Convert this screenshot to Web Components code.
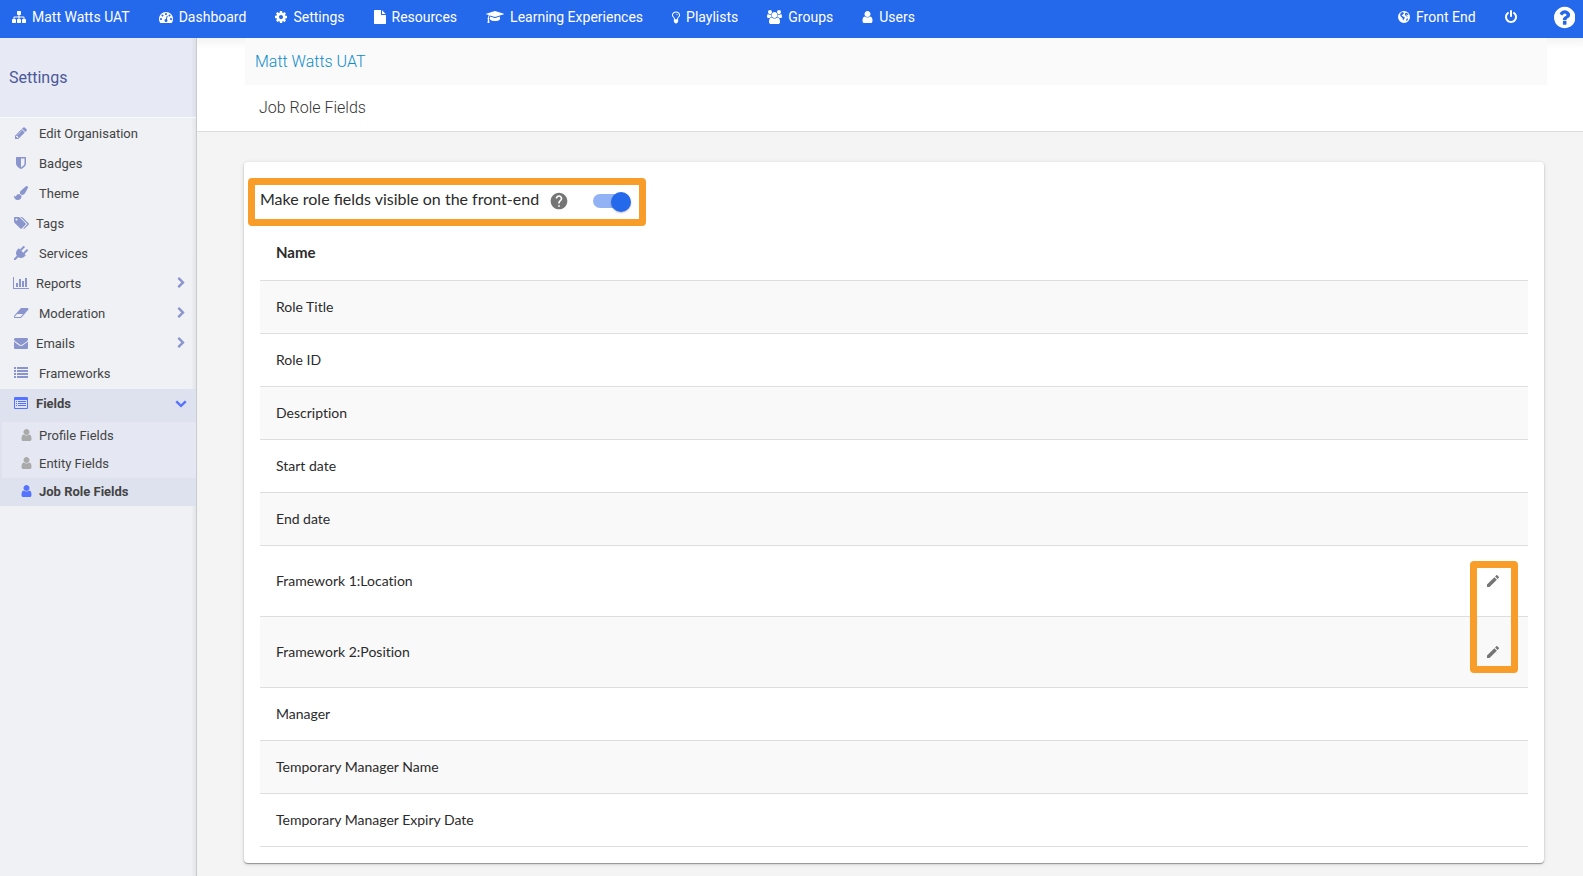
<!DOCTYPE html>
<html lang="en">
<head>
<meta charset="utf-8">
<meta name="viewport" content="width=device-width, initial-scale=1">
<title>Job Role Fields</title>
<style>
  body { margin: 0; font-family: Roboto, "Liberation Sans", sans-serif; font-size: 14px; color: #444; background: #f4f4f4; }
</style>
</head>
<body>
<app-shell>
  <top-bar slot="top">
    <top-link icon="sitemap">Matt Watts UAT</top-link>
    <top-link icon="dashboard">Dashboard</top-link>
    <top-link icon="cog">Settings</top-link>
    <top-link icon="file">Resources</top-link>
    <top-link icon="graduation">Learning Experiences</top-link>
    <top-link icon="bulb">Playlists</top-link>
    <top-link icon="users">Groups</top-link>
    <top-link icon="user">Users</top-link>
    <top-link slot="end" icon="globe">Front End</top-link>
    <top-link slot="end" icon="power" label="Log out"></top-link>
    <top-link slot="end" icon="question" label="Help" large></top-link>
  </top-bar>
  <side-nav slot="side" heading="Settings">
    <side-link icon="pencil">Edit Organisation</side-link>
    <side-link icon="shield">Badges</side-link>
    <side-link icon="brush">Theme</side-link>
    <side-link icon="tags" tight>Tags</side-link>
    <side-link icon="plug">Services</side-link>
    <side-link icon="chart" arrow="right" tight>Reports</side-link>
    <side-link icon="eraser" arrow="right">Moderation</side-link>
    <side-link icon="envelope" arrow="right" tight>Emails</side-link>
    <side-link icon="list">Frameworks</side-link>
    <side-link icon="listalt" arrow="down" tight active>Fields</side-link>
    <side-group>
      <side-link icon="user" sub>Profile Fields</side-link>
      <side-link icon="user" sub>Entity Fields</side-link>
      <side-link icon="user" sub active>Job Role Fields</side-link>
    </side-group>
  </side-nav>
  <page-heading>
    <span slot="crumb">Matt Watts UAT</span>
    Job Role Fields
  </page-heading>
  <content-card>
    <toggle-setting>Make role fields visible on the front-end</toggle-setting>
    <fields-table></fields-table>
  </content-card>
</app-shell>

<script>
// Glyphs: [viewBox, path data]
const ICONS = {
  sitemap: ["0 0 1792 1792", "M1792 1248v320q0 40-28 68t-68 28h-320q-40 0-68-28t-28-68v-320q0-40 28-68t68-28h96v-192h-512v192h96q40 0 68 28t28 68v320q0 40-28 68t-68 28h-320q-40 0-68-28t-28-68v-320q0-40 28-68t68-28h96v-192h-512v192h96q40 0 68 28t28 68v320q0 40-28 68t-68 28h-320q-40 0-68-28t-28-68v-320q0-40 28-68t68-28h96v-192q0-52 38-90t90-38h512v-192h-96q-40 0-68-28t-28-68v-320q0-40 28-68t68-28h320q40 0 68 28t28 68v320q0 40-28 68t-68 28h-96v192h512q52 0 90 38t38 90v192h96q40 0 68 28t28 68z"],
  dashboard: ["0 0 1792 1792", "M384 1152q0-53-37.5-90.5t-90.5-37.5-90.5 37.5-37.5 90.5 37.5 90.5 90.5 37.5 90.5-37.5 37.5-90.5zm192-448q0-53-37.5-90.5t-90.5-37.5-90.5 37.5-37.5 90.5 37.5 90.5 90.5 37.5 90.5-37.5 37.5-90.5zm428 481l101-382q6-26-7.5-48.5t-38.5-29.5-48 6.5-30 39.5l-101 382q-60 5-107 43.5t-63 98.5q-20 77 20 146t117 89 146-20 89-117q16-60-6-117t-72-91zm660-33q0-53-37.5-90.5t-90.5-37.5-90.5 37.5-37.5 90.5 37.5 90.5 90.5 37.5 90.5-37.5 37.5-90.5zm-640-640q0-53-37.5-90.5t-90.5-37.5-90.5 37.5-37.5 90.5 37.5 90.5 90.5 37.5 90.5-37.5 37.5-90.5zm448 192q0-53-37.5-90.5t-90.5-37.5-90.5 37.5-37.5 90.5 37.5 90.5 90.5 37.5 90.5-37.5 37.5-90.5zm320 448q0 261-141 483-19 29-54 29h-1402q-35 0-54-29-141-221-141-483 0-182 71-348t191-286 286-191 348-71 348 71 286 191 191 286 71 348z"],
  cog: ["128 0 1536 1792", "M1152 896q0-106-75-181t-181-75-181 75-75 181 75 181 181 75 181-75 75-181zm512-109v222q0 12-8 23t-20 13l-185 28q-19 54-39 91 35 50 107 138 10 12 10 25t-9 23q-27 37-99 108t-94 71q-12 0-26-9l-138-108q-44 23-91 38-16 136-29 186-7 28-36 28h-222q-14 0-24.5-8.5t-11.5-21.5l-28-184q-49-16-90-37l-141 107q-10 9-25 9-14 0-25-11-126-114-165-168-7-10-7-23 0-12 8-23 15-21 51-66.5t54-70.5q-27-50-41-99l-183-27q-13-2-21-12.5t-8-23.5v-222q0-12 8-23t19-13l186-28q14-46 39-92-40-57-107-138-10-12-10-24 0-10 9-23 26-36 98.5-107.5t94.5-71.5q13 0 26 10l138 107q44-23 91-38 16-136 29-186 7-28 36-28h222q14 0 24.5 8.5t11.5 21.5l28 184q49 16 90 37l142-107q9-9 24-9 13 0 25 10 129 119 165 170 7 8 7 22 0 12-8 23-15 21-51 66.5t-54 70.5q26 50 41 98l183 28q13 2 21 12.5t8 23.5z"],
  file: ["128 0 1536 1792", "M1152 512v-472q22 14 36 28l408 408q14 14 28 36h-472zm-128 32q0 40 28 68t68 28h544v1056q0 40-28 68t-68 28h-1344q-40 0-68-28t-28-68v-1600q0-40 28-68t68-28h800v544z"],
  graduation: ["0 0 2304 1792", "M1774 836l18 316q4 69-82 128t-235 93.5-323 34.5-323-34.5-235-93.5-82-128l18-316 574 181q22 7 48 7t48-7zm530-324q0 23-22 31l-1120 352q-4 1-10 1t-10-1l-652-206q-43 34-71 111.5t-34 178.5q63 36 63 109 0 69-58 107l58 433q2 14-8 25-9 11-24 11h-192q-15 0-24-11-10-11-8-25l58-433q-58-38-58-107 0-73 65-111 11-207 98-330l-333-104q-22-8-22-31t22-31l1120-352q4-1 10-1t10 1l1120 352q22 8 22 31z"],
  bulb: ["384 0 1024 1792", "M1120 640q0 13-9.5 22.5t-22.5 9.5-22.5-9.5-9.5-22.5q0-46-54-71t-106-25q-13 0-22.5-9.5t-9.5-22.5 9.5-22.5 22.5-9.5q50 0 99.5 16t87 54 37.5 90zm160 0q0-72-34.5-134t-90-101.5-123-62-136.5-22.5-136.5 22.5-123 62-90 101.5-34.5 134q0 101 68 180 10 11 30.5 33t30.5 33q128 153 141 298h228q13-145 141-298 10-11 30.5-33t30.5-33q68-79 68-180zm128 0q0 155-103 268-45 49-74.5 87t-59.5 95.5-34 107.5q47 28 47 82 0 37-25 64 25 27 25 64 0 52-45 81 13 23 13 47 0 46-31.5 71t-77.5 25q-20 44-60 70t-87 26-87-26-60-70q-46 0-77.5-25t-31.5-71q0-24 13-47-45-29-45-81 0-37 25-64-25-27-25-64 0-54 47-82-4-50-34-107.5t-59.5-95.5-74.5-87q-103-113-103-268 0-99 44.5-184.5t117-142 164-89 186.5-32.5 186.5 32.5 164 89 117 142 44.5 184.5z"],
  users: ["0 0 1920 1792", "M593 896q-162 5-265 128h-134q-82 0-138-40.5t-56-118.5q0-353 124-353 6 0 43.5 21t97.5 42.5 119 21.5q67 0 133-23-5 37-5 66 0 139 81 256zm1071 637q0 120-73 189.5t-194 69.5h-874q-121 0-194-69.5t-73-189.5q0-53 3.5-103.5t14-109 26.5-108.5 43-97.5 62-81 85.5-53.5 111.5-20q10 0 43 21.5t73 48 107 48 135 21.5 135-21.5 107-48 73-48 43-21.5q61 0 111.5 20t85.5 53.5 62 81 43 97.5 26.5 108.5 14 109 3.5 103.5zm-1024-1277q0 106-75 181t-181 75-181-75-75-181 75-181 181-75 181 75 75 181zm704 384q0 159-112.5 271.5t-271.5 112.5-271.5-112.5-112.5-271.5 112.5-271.5 271.5-112.5 271.5 112.5 112.5 271.5zm576 225q0 78-56 118.5t-138 40.5h-134q-103-123-265-128 81-117 81-256 0-29-5-66 66 23 133 23 59 0 119-21.5t97.5-42.5 43.5-21q124 0 124 353zm-128-609q0 106-75 181t-181 75-181-75-75-181 75-181 181-75 181 75 75 181z"],
  user: ["192 0 1408 1792", "M1536 1399q0 109-62.5 187t-150.5 78h-854q-88 0-150.5-78t-62.5-187q0-85 8.5-160.5t31.5-152 58.5-131 94-89 134.5-34.5q131 128 313 128t313-128q76 0 134.5 34.5t94 89 58.5 131 31.5 152 8.5 160.5zm-256-887q0 159-112.5 271.5t-271.5 112.5-271.5-112.5-112.5-271.5 112.5-271.5 271.5-112.5 271.5 112.5 112.5 271.5z"],
  globe: ["128 0 1536 1792", "M896 128a768 768 0 1 0 0 1536a768 768 0 1 0 0-1536zM500 370L620 300L850 260L800 350L900 400L850 480L770 500L720 600L600 680L640 770L760 800L880 900L1000 960L960 1080L860 1180L830 1340L760 1280L720 1080L620 960L480 820L400 640L420 500zM1090 380L1250 360L1400 480L1480 620L1380 640L1260 560L1160 600L1240 720L1380 760L1300 860L1140 780L1040 640L1000 520zM1240 1130L1380 1060L1420 1160L1300 1330L1180 1400L1160 1280z"],
  power: ["128 0 1536 1792", "M1664 896q0 156-61 298t-164 245-245 164-298 61-298-61-245-164-164-245-61-298q0-182 80.5-343t226.5-270q43-32 95.5-25t83.5 50q32 42 24.5 94.5t-49.5 84.5q-98 74-151.5 181t-53.5 228q0 104 40.5 198.5t109.5 163.5 163.5 109.5 198.5 40.5 198.5-40.5 163.5-109.5 109.5-163.5 40.5-198.5q0-121-53.5-228t-151.5-181q-42-32-49.5-84.5t24.5-94.5q31-43 84-50t95 25q146 109 226.5 270t80.5 343zm-640-768v640q0 52-38 90t-90 38-90-38-38-90v-640q0-52 38-90t90-38 90 38 38 90z"],
  question: ["128 0 1536 1792", "M1024 1376v-192q0-14-9-23t-23-9h-192q-14 0-23 9t-9 23v192q0 14 9 23t23 9h192q14 0 23-9t9-23zm256-672q0-88-55.5-163t-138.5-116-170-41q-243 0-371 213-15 24 8 42l132 100q7 6 19 6 16 0 25-12 53-68 86-92 34-24 86-24 48 0 85.5 26t37.5 59q0 38-20 61t-68 45q-63 28-115.5 86.5t-52.5 125.5v36q0 14 9 23t23 9h192q14 0 23-9t9-23q0-19 21.5-49.5t54.5-49.5q32-18 49-28.5t46-35 44.5-48 28-60.5 12.5-81zm384 192q0 209-103 385.5t-279.5 279.5-385.5 103-385.5-103-279.5-279.5-103-385.5 103-385.5 279.5-279.5 385.5-103 385.5 103 279.5 279.5 103 385.5z"],
  pencil: ["128 0 1536 1792", "M491 1536l91-91-235-235-91 91v107h128v128h107zm523-928q0-22-22-22-10 0-17 7l-542 542q-7 7-7 17 0 22 22 22 10 0 17-7l542-542q7-7 7-17zm-54-192l416 416-832 832h-416v-416zm683 96q0 53-37 90l-166 166-416-416 166-165q36-38 90-38 53 0 91 38l235 234q37 39 37 91z"],
  shield: ["256 0 1280 1792", "M1344 960v-640h-448v1137q119-63 213-137 235-184 235-360zm192-768v768q0 86-33.5 170.5t-83 150-118 127.5-126.5 103-121 77.5-89.5 49.5-42.5 20q-12 6-26 6t-26-6q-16-7-42.5-20t-89.5-49.5-121-77.5-126.5-103-118-127.5-83-150-33.5-170.5v-768q0-26 19-45t45-19h1152q26 0 45 19t19 45z"],
  brush: ["0 0 1792 1792", "M1615 0q70 0 122.5 46.5t52.5 116.5q0 63-45 151-332 629-465 752-97 91-218 91-126 0-216.5-92.5t-90.5-219.5q0-128 92-212l638-579q59-54 130-54zm-909 1034q39 76 106.5 130t150.5 76l1 71q4 213-129.5 347t-348.5 134q-123 0-218-46.5t-152.5-127.5-86.5-183-29-220q7 5 41 30t62 44.5 59 36.5 46 17q41 0 55-37 25-66 57.5-112.5t69.5-76 88-47.5 103-25.5 125-10.5z"],
  tags: ["0 0 1920 1792", "M448 448q0-53-37.5-90.5t-90.5-37.5-90.5 37.5-37.5 90.5 37.5 90.5 90.5 37.5 90.5-37.5 37.5-90.5zm1067 576q0 53-37 90l-491 492q-39 37-91 37-53 0-90-37l-715-716q-38-37-64.5-101t-26.5-117v-416q0-52 38-90t90-38h416q53 0 117 26.5t102 64.5l715 714q37 39 37 91zm384 0q0 53-37 90l-491 492q-39 37-91 37-36 0-59-14t-53-45l470-470q37-37 37-90 0-52-37-91l-715-714q-38-38-102-64.5t-117-26.5h224q53 0 117 26.5t102 64.5l715 714q37 39 37 91z"],
  plug: ["0 0 1792 1792", "M1755 453q37 38 37 90.5t-37 90.5l-401 400 150 150-160 160q-163 163-389.5 186.5t-411.5-100.5l-362 362h-181v-181l362-362q-124-185-100.5-411.5t186.5-389.5l160-160 150 150 400-401q38-37 91-37t90 37 37 90.5-37 90.5l-400 401 234 234 401-400q38-37 91-37t90 37z"],
  chart: ["0 0 2048 1792", "M640 896v512h-256v-512h256zm384-512v1024h-256v-1024h256zm1024 1152v128h-2048v-1536h128v1408h1920zm-640-896v768h-256v-768h256zm384-384v1152h-256v-1152h256z"],
  eraser: ["0 0 1920 1792", "M832 1408l336-384h-768l-336 384h768zm1013-1077q15 34 9.5 71.5t-30.5 65.5l-896 1024q-38 44-96 44h-768q-38 0-69.5-20.5t-47.5-54.5q-15-34-9.5-71.5t30.5-65.5l896-1024q38-44 96-44h768q38 0 69.5 20.5t47.5 54.5z"],
  envelope: ["0 0 1792 1792", "M1792 710v794q0 66-47 113t-113 47h-1472q-66 0-113-47t-47-113v-794q44 49 101 87 362 246 497 345 57 42 92.5 65.5t94.5 48 110 24.5h2q51 0 110-24.5t94.5-48 92.5-65.5q170-123 498-345 57-39 100-87zm0-294q0 79-49 151t-122 123q-376 261-468 325-10 7-42.5 31t-54 38.5-52 32.5-57.5 27-50 9h-2q-23 0-50-9t-57.5-27-52-32.5-54-38.5-42.5-31q-91-64-262-182.5t-205-142.5q-62-42-117-115.5t-55-136.5q0-78 41.5-130t118.5-52h1472q65 0 112.5 47t47.5 113z"],
  list: ["0 0 1792 1792", "M0 1280h256v256h-256zM384 1280h1408v256h-1408zM0 896h256v256h-256zM384 896h1408v256h-1408zM0 512h256v256h-256zM384 512h1408v256h-1408zM0 128h256v256h-256zM384 128h1408v256h-1408z"],
  listalt: ["0 0 1792 1792", "M160 128h1472q66 0 113 47t47 113v1216q0 66-47 113t-113 47h-1472q-66 0-113-47t-47-113v-1216q0-66 47-113t113-47zM128 512v992q0 32 32 32h1472q32 0 32-32v-992zM256 640h128v128h-128zM512 640h1024v128h-1024zM256 896h128v128h-128zM512 896h1024v128h-1024zM256 1152h128v128h-128zM512 1152h1024v128h-1024z"],
  right: ["256 0 1280 1792", "M1363 877l-742 742q-19 19-45 19t-45-19l-166-166q-19-19-19-45t19-45l531-531-531-531q-19-19-19-45t19-45l166-166q19-19 45-19t45 19l742 742q19 19 19 45t-19 45z"],
  down: ["0 0 1792 1792", "M1683 808l-742 741q-19 19-45 19t-45-19l-742-741q-19-19-19-45.5t19-45.5l166-165q19-19 45-19t45 19l531 531 531-531q19-19 45-19t45 19l166 165q19 19 19 45.5t-19 45.5z"],
  help: ["0 0 24 24", "M12 2C6.48 2 2 6.48 2 12s4.48 10 10 10 10-4.48 10-10S17.52 2 12 2zm1 17h-2v-2h2v2zm2.07-7.75l-.9.92C13.45 12.9 13 13.5 13 15h-2v-.5c0-1.1.45-2.1 1.17-2.83l1.24-1.26c.37-.36.59-.86.59-1.41 0-1.1-.9-2-2-2s-2 .9-2 2H8c0-2.21 1.79-4 4-4s4 1.79 4 4c0 .88-.36 1.68-.93 2.25z"],
  edit: ["0 0 24 24", "M3 17.25V21h3.75L17.81 9.94l-3.75-3.75L3 17.25zM20.71 7.04c.39-.39.39-1.02 0-1.41l-2.34-2.34c-.39-.39-1.02-.39-1.41 0l-1.83 1.83 3.75 3.75 1.83-1.83z"]
};

const define = (name, render) => customElements.define(name, class extends HTMLElement {
  connectedCallback() {
    if (!this.shadowRoot) this.attachShadow({ mode: "open" }).innerHTML = render(this);
  }
});

define("app-icon", el => {
  const [box, d] = ICONS[el.getAttribute("name")];
  return `
  <style>
    :host { display: inline-flex; flex: none; height: var(--icon-size, 14px); }
    svg { display: block; height: 100%; width: auto; fill: currentColor; }
  </style>
  <svg viewBox="${box}" aria-hidden="true"><path fill-rule="${/globe|listalt/.test(el.getAttribute("name")) ? "evenodd" : "nonzero"}" d="${d}"/></svg>`;
});

define("app-shell", () => `
  <style>
    :host { display: grid; grid-template: auto 1fr / 197px minmax(0, 1fr); min-height: 100vh; }
    header { grid-column: 1 / -1; }
    aside { display: grid; }
    main { min-width: 0; }
  </style>
  <header><slot name="top"></slot></header>
  <aside><slot name="side"></slot></aside>
  <main><slot></slot></main>`);

define("top-bar", () => `
  <style>
    :host { display: block; background: #2468eb; color: #fff; }
    nav { display: flex; align-items: center; justify-content: space-between; height: 38px; padding: 0 8px 4px 12px; box-sizing: border-box; }
    div { display: flex; align-items: center; gap: 29px; }
  </style>
  <nav aria-label="Main"><div><slot></slot></div><div><slot name="end"></slot></div></nav>`);

define("top-link", el => `
  <style>
    :host { display: block; }
    :host([large]) { --icon-size: 25px; margin-left: 8px; }
    a { display: flex; align-items: center; gap: 6px; color: inherit; text-decoration: none; line-height: 20px; white-space: nowrap; }
  </style>
  <a href="#"${el.hasAttribute("label") ? ` aria-label="${el.getAttribute("label")}"` : ""}><app-icon name="${el.getAttribute("icon")}"></app-icon>${el.hasAttribute("label") ? "" : "<slot></slot>"}</a>`);

define("side-nav", el => `
  <style>
    :host { display: block; background: linear-gradient(to left, rgba(0,0,0,.05), transparent 5px) #eff1f5; border-right: 1px solid #c9cacd; box-sizing: border-box; font-size: 13px; }
    h2 { margin: 0; height: 80px; box-sizing: border-box; line-height: 79px; padding-left: 9px; font-size: 16px; font-weight: 400; color: #4c5899; background: linear-gradient(to left, rgba(0,0,0,.05), transparent 5px) #e7eaf4; border-bottom: 1px solid #f8f9fb; }
    nav { padding-top: 1px; }
  </style>
  <h2>${el.getAttribute("heading")}</h2>
  <nav aria-label="${el.getAttribute("heading")}"><slot></slot></nav>`);

define("side-group", () => `
  <style>
    :host { display: block; background: #dfe2ee; padding-top: 3px; }
  </style>
  <slot></slot>`);

define("side-link", el => `
  <style>
    :host { display: block; }
    a { display: flex; align-items: center; height: 30px; padding: 0 8px 2px 12px; box-sizing: border-box; color: #444; text-decoration: none; }
    .lead { display: flex; justify-content: center; width: 18px; margin-right: 9px; color: #8b95cd; }
    .text { flex: 1; }
    .arrow { display: flex; justify-content: center; width: 14px; color: #8b95cd; --icon-size: 12px; }
    :host([tight]) .lead { margin-right: 6px; }
    :host([active]) a { background: #dee2ef; font-weight: 700; }
    :host([active]) .lead, :host([active]) .arrow { color: #5673ff; }
    :host([sub]) a { height: 28px; padding-left: 17px; }
    :host([sub]) .lead { margin-right: 4px; }
    :host([sub]:not([active])) a { background: #e5e8f3; margin-left: 2px; padding-left: 15px; }
    :host([sub]:not([active])) .lead { color: #aaa; }
  </style>
  <a href="#"${el.hasAttribute("active") && el.hasAttribute("sub") ? ' aria-current="page"' : ""}>
    <span class="lead"><app-icon name="${el.getAttribute("icon")}"></app-icon></span>
    <span class="text"><slot></slot></span>
    ${el.hasAttribute("arrow") ? `<span class="arrow"><app-icon name="${el.getAttribute("arrow")}"></app-icon></span>` : ""}
  </a>`);

define("page-heading", () => `
  <style>
    :host { display: block; background: linear-gradient(#f4f4f4, #fff 11px); border-bottom: 1px solid #dcdcdc; padding: 0 36px 0 48px; font-weight: 300; font-size: 16px; }
    .crumb { background: #fafafa; padding: 0 10px; line-height: 47px; }
    a { color: #0d8bcd; text-decoration: none; }
    h1 { margin: 0; padding-left: 14px; font-size: 16px; font-weight: 300; line-height: 46px; color: #333; }
  </style>
  <div class="crumb"><a href="#"><slot name="crumb"></slot></a></div>
  <h1><slot></slot></h1>`);

define("content-card", () => `
  <style>
    :host { display: block; margin: 30px 39px 13px 47px; padding: 16px; background: #fff; border-radius: 4px; box-shadow: 0 1px 1px rgba(0,0,0,.35), 0 1px 4px rgba(0,0,0,.15); font-family: Lato, sans-serif; color: #2b2b2b; }
  </style>
  <slot></slot>`);

define("toggle-setting", () => `
  <style>
    :host { display: block; margin-left: -12px; }
    .frame { display: inline-flex; align-items: center; vertical-align: top; height: 48px; box-sizing: border-box; border: 7px solid #f99d2a; border-radius: 4px; padding: 0 8px 6px 5px; font-size: 16px; line-height: 24px; }
    button { display: flex; margin: 3px 24px 0 10px; padding: 0; border: 0; background: none; color: #757575; --icon-size: 20px; }
    input { appearance: none; position: relative; width: 38px; height: 20px; margin: 4px 0 0; cursor: pointer; }
    input::before { content: ""; position: absolute; top: 3px; left: 0; width: 30px; height: 14px; border-radius: 7px; background: #91b3f5; }
    input::after { content: ""; position: absolute; top: 1px; right: 0; width: 20px; height: 20px; border-radius: 50%; background: #2468eb; box-shadow: 0 1px 2px rgba(0,0,0,.25); }
    input:not(:checked)::after { right: 18px; background: #fafafa; }
  </style>
  <div class="frame">
    <label for="visible"><slot></slot></label>
    <button type="button" aria-label="More information"><app-icon name="help"></app-icon></button>
    <input id="visible" type="checkbox" role="switch" checked>
  </div>`);

const FIELDS = [
  { name: "Role Title" },
  { name: "Role ID" },
  { name: "Description" },
  { name: "Start date" },
  { name: "End date" },
  { name: "Framework 1:Location", editable: true, marked: true },
  { name: "Framework 2:Position", editable: true },
  { name: "Manager" },
  { name: "Temporary Manager Name" },
  { name: "Temporary Manager Expiry Date" }
];

define("fields-table", () => `
  <style>
    :host { display: block; font-variant-ligatures: none; }
    table { width: 100%; border-collapse: separate; border-spacing: 0; font-size: 14px; }
    th, td { height: 50px; padding: 0 16px 2px; text-align: left; border-bottom: 1px solid #dedede; }
    thead th { height: 52px; font-size: 15px; font-weight: 700; }
    tbody tr:nth-child(odd) { background: #f9f9f9; }
    .tall td { height: 68px; }
    .tall .actions { width: 40px; height: 70px; padding: 0 15px; position: relative; }
    button { display: flex; align-items: center; justify-content: center; width: 40px; height: 40px; padding: 0; border: 0; background: none; color: #757575; --icon-size: 16px; }
    .mark { position: absolute; z-index: 1; top: 15px; right: 10px; width: 48px; height: 112px; box-sizing: border-box; border: 7px solid #f99d2a; border-radius: 4px; pointer-events: none; }
  </style>
  <table>
    <thead><tr><th scope="col" colspan="2">Name</th></tr></thead>
    <tbody>${FIELDS.map(f => `
      <tr${f.editable ? ' class="tall"' : ""}>
        <td${f.editable ? "" : ' colspan="2"'}>${f.name}</td>
        ${f.editable ? `<td class="actions"><button type="button" aria-label="Edit ${f.name}"><app-icon name="edit"></app-icon></button>${f.marked ? '<span class="mark"></span>' : ""}</td>` : ""}
      </tr>`).join("")}
    </tbody>
  </table>`);
</script>
</body>
</html>
